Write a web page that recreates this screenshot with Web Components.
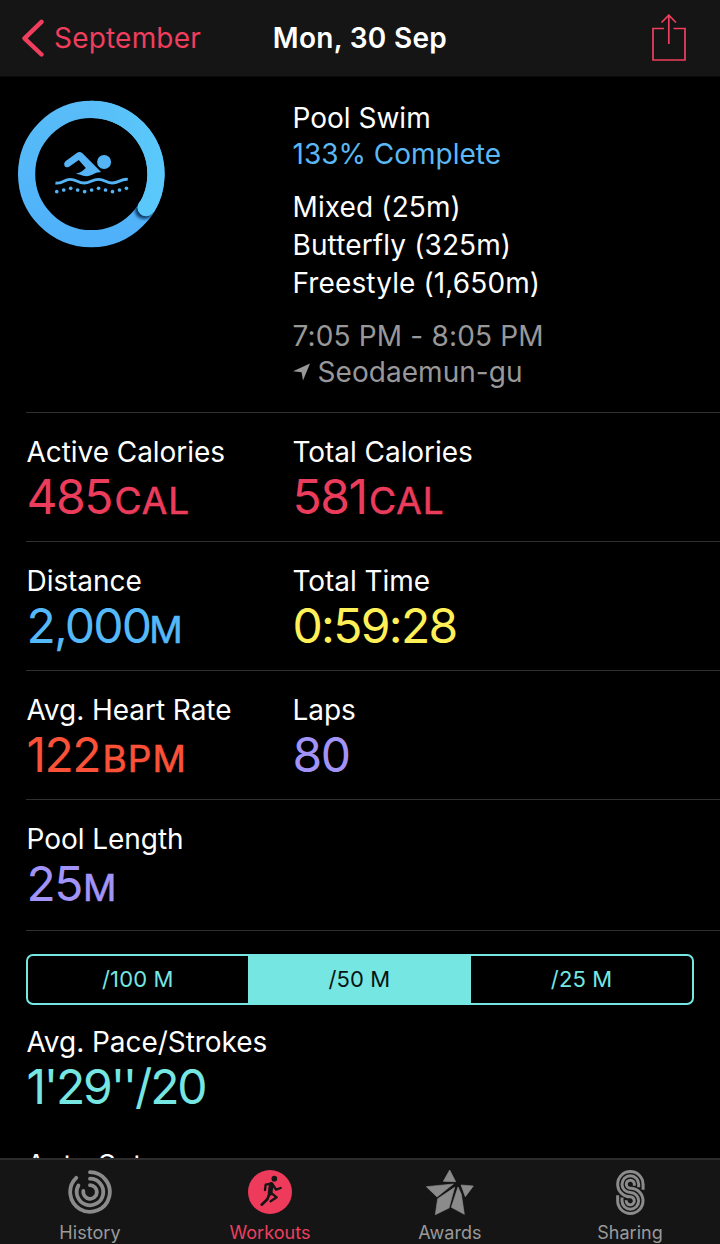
<!DOCTYPE html>
<html lang="en">
<head>
<meta charset="utf-8">
<title>Workout</title>
<style>
  body {
    margin: 0;
    background: #000;
    color: #fff;
    font-family: Inter, "Liberation Sans", sans-serif;
  }
</style>
</head>
<body>
<workout-app></workout-app>

<script>
class NavBar extends HTMLElement {
  constructor() {
    super();
    this.attachShadow({ mode: 'open' });
  }

  connectedCallback() {
    this.shadowRoot.innerHTML = `
      <style>
        :host {
          display: grid;
          grid-template-columns: 1fr auto 1fr;
          align-items: center;
          height: 77px;
          box-sizing: border-box;
          padding: 0 33px 0 21px;
          background: #151515;
          border-bottom: 1px solid #0b0b0b;
          font-size: 28px;
        }
        .back {
          display: flex;
          align-items: center;
          gap: 8px;
          color: #f03e5e;
          letter-spacing: 0.2px;
        }
        h1 {
          margin: 0 -6px 0 6px;
          font-size: 28px;
          font-weight: 600;
          letter-spacing: 0.3px;
        }
        svg { display: block; fill: none; stroke: #f03e5e; }
        .share { justify-self: end; }
      </style>
      <div class="back">
        <svg width="25" height="38" viewBox="0 0 25 38" stroke-width="4.4" stroke-linecap="round" stroke-linejoin="round">
          <path d="M20.5 2.8 3.5 19.3 20.5 35.5"/>
        </svg>
        <slot name="back"></slot>
      </div>
      <h1><slot></slot></h1>
      <svg class="share" width="36" height="48" viewBox="0 0 36 48" stroke-width="1.7">
        <path d="M13 14.5H2V46H34V14.5H22.5M17.8 1V30M10.5 8.5 17.8 1.2 25 8.5"/>
      </svg>
    `;
  }
}

class ProgressRing extends HTMLElement {
  constructor() {
    super();
    this.attachShadow({ mode: 'open' });
  }

  connectedCallback() {
    const dots = [335, 330, 325, 330, 335, 330, 325, 330, 335, 330, 325]
      .map((y, i) => `<circle cx="${170 + i * 20.9}" cy="${y}" r="5.5"/>`)
      .join('');

    this.shadowRoot.innerHTML = `
      <style>
        :host { display: block; }
        svg { display: block; }
      </style>
      <svg width="148" height="148" viewBox="0 0 148 148">
        <defs>
          <linearGradient id="base" x1="0" y1="148" x2="0" y2="0" gradientUnits="userSpaceOnUse">
            <stop offset="0" stop-color="#4fb0fa"/>
            <stop offset="1" stop-color="#58bdf8"/>
          </linearGradient>
          <linearGradient id="lead" x1="74" y1="0" x2="138" y2="0" gradientUnits="userSpaceOnUse">
            <stop offset="0" stop-color="#58bdf8"/>
            <stop offset="1" stop-color="#5ac8fa"/>
          </linearGradient>
          <mask id="band">
            <circle cx="74.3" cy="74" r="64.7" fill="none" stroke="#fff" stroke-width="17.2"/>
          </mask>
          <filter id="soft" x="-50%" y="-50%" width="200%" height="200%"><feGaussianBlur stdDeviation="1.8"/></filter>
        </defs>
        <circle cx="74.3" cy="74" r="64.7" fill="none" stroke="url(#base)" stroke-width="17.2"/>
        <g mask="url(#band)">
          <circle cx="127.2" cy="109.5" r="9.5" fill="#0a3a66" filter="url(#soft)"/>
        </g>
        <path d="M74.3 9.3A64.7 64.7 0 0 1 129.4 107.9" fill="none" stroke="url(#lead)" stroke-width="17.2"/>
        <circle cx="129" cy="107.6" r="8.6" fill="#5ac8fa"/>
        <g transform="translate(-16.9 -20) scale(.33333)" fill="#54b4f6">
          <circle cx="312" cy="246" r="21"/>
          <path d="M196 244 231 218Q239 213 247 220L303 276Q287 277 276 284 264 291 249 287 238 283 227 281 244 278 257 264L236 240 207 260Q197 265 193 257 190 249 196 244Z"/>
          <path d="M166 309C190 313 190 298 210 298S233 309 252 309 275 298 295 298 318 309 337 309 362 296 383 298" fill="none" stroke="#54b4f6" stroke-width="8.5"/>
          ${dots}
        </g>
      </svg>
    `;
  }
}

class WorkoutSummary extends HTMLElement {
  constructor() {
    super();
    this.attachShadow({ mode: 'open' });
  }

  connectedCallback() {
    this.shadowRoot.innerHTML = `
      <style>
        :host {
          display: grid;
          grid-template-columns: 275.5px 1fr;
          height: 335px;
          box-sizing: border-box;
          padding: 23px 0 0 17px;
          font-size: 28px;
          line-height: 36px;
        }
        .complete { color: #5bb8f5; }
        .strokes { margin: 16px 0 15px; line-height: 38.2px; letter-spacing: 0.12px; }
        .when { color: #98989a; letter-spacing: 0.16px; }
        .place { display: flex; align-items: center; gap: 8px; letter-spacing: 0.05px; }
      </style>
      <progress-ring></progress-ring>
      <div>
        <div><slot name="name"></slot></div>
        <div class="complete"><slot name="complete"></slot></div>
        <div class="strokes"><slot name="stroke"></slot></div>
        <div class="when">
          <div><slot name="time"></slot></div>
          <div class="place">
            <svg width="17" height="18" viewBox="0 0 17 18" fill="#98989a"><path d="M0 8.2 17 .6 10 17.6 8.6 9.2Z"/></svg>
            <slot name="place"></slot>
          </div>
        </div>
      </div>
    `;
  }
}

class MetricRow extends HTMLElement {
  constructor() {
    super();
    this.attachShadow({ mode: 'open' });
  }

  connectedCallback() {
    this.shadowRoot.innerHTML = `
      <style>
        :host {
          display: grid;
          grid-template-columns: 266px 1fr;
          height: 129px;
          box-sizing: border-box;
          margin-left: 26px;
          padding: 21px 0 0 0.5px;
          border-top: 1px solid #303032;
        }
      </style>
      <slot></slot>
    `;
  }
}

class MetricValue extends HTMLElement {
  constructor() {
    super();
    this.attachShadow({ mode: 'open' });
  }

  connectedCallback() {
    const unit = this.getAttribute('unit') || '';
    this.shadowRoot.innerHTML = `
      <style>
        :host { display: block; white-space: nowrap; }
        .label { font-size: 28px; line-height: 36px; letter-spacing: var(--label-tracking, -0.05px); }
        .value {
          font-size: 48px;
          line-height: 54px;
          color: var(--tint);
          letter-spacing: var(--tracking, -1.5px);
        }
        .unit {
          margin-left: var(--unit-gap, 2.5px);
          font-size: 37px;
          letter-spacing: 1px;
          -webkit-text-stroke: 0.6px currentColor;
        }
      </style>
      <div class="label">${this.getAttribute('label')}</div>
      <div class="value"><slot></slot><span class="unit">${unit}</span></div>
    `;
  }
}

class SegmentedControl extends HTMLElement {
  constructor() {
    super();
    this.attachShadow({ mode: 'open' });
  }

  connectedCallback() {
    this.shadowRoot.innerHTML = `
      <style>
        :host {
          display: grid;
          grid-template-columns: 219.5px 223.5px 1fr;
          height: 51px;
          box-sizing: border-box;
          border: 2px solid #76e6e2;
          border-radius: 7px;
          overflow: hidden;
          color: #76e6e2;
          font-size: 22px;
          line-height: 47px;
          letter-spacing: 0.1px;
          text-align: center;
        }
        ::slotted([selected]) { background: #76e6e2; color: #071414; }
      </style>
      <slot></slot>
    `;
  }
}

const TAB_ICONS = {
  history: `<svg width="44" height="44" viewBox="0 0 44 44" fill="none" stroke="currentColor" stroke-width="3.8" stroke-linecap="round">
      <path d="M22 2.2A19.8 19.8 0 1 1 8.2 7.8"/>
      <path d="M22 8.7A13.3 13.3 0 1 1 10.4 15.5"/>
      <path d="M22 15.2A6.8 6.8 0 1 1 15.3 21"/>
    </svg>`,
  workouts: `<svg width="44" height="44" viewBox="0 0 132 132">
      <circle cx="66" cy="66" r="66" fill="#ee3a5b"/>
      <circle cx="79" cy="26" r="8.5" fill="#151515"/>
      <g fill="none" stroke="#151515" stroke-width="7" stroke-linecap="round" stroke-linejoin="round">
        <path d="M70 41 53 44 51 60M75 45 84 59 98 54M71 70 86 82 68 94"/>
        <path d="M65 70 58 88 41 104" stroke-width="8"/>
        <path d="M70 43 66 70" stroke-width="14"/>
      </g>
    </svg>`,
  awards: `<svg width="48" height="46.7" viewBox="198 118 144 140" fill="currentColor" stroke="currentColor" stroke-width="2" stroke-linejoin="round">
      <path d="M269 121 287 156 250 155ZM199 171 280 163 231 202ZM233 207 284 173 267 235 226 255ZM294 172 304 194 313 254 274 233ZM303 166 340 169 316 201Z"/>
    </svg>`,
  sharing: `<svg width="29" height="45" viewBox="766 119 87 134" fill="none" stroke="currentColor" stroke-width="9">
      <path d="M847 178Q848 171 847 161A38 38 0 1 0 809 199A12 12 0 1 1 797 209"/>
      <path d="M834 170V161A25 25 0 1 0 809 186A25 25 0 1 1 784 211V201"/>
      <path d="M821 166V161A12 12 0 1 0 809 173A38 38 0 1 1 771 211V194"/>
    </svg>`
};

class TabItem extends HTMLElement {
  constructor() {
    super();
    this.attachShadow({ mode: 'open' });
  }

  connectedCallback() {
    this.shadowRoot.innerHTML = `
      <style>
        :host {
          display: flex;
          flex-direction: column;
          align-items: center;
          color: #9a9a9b;
          font-size: 18px;
          line-height: 22px;
          letter-spacing: 0.05px;
        }
        :host([active]) { color: #ee3f60; }
        .icon {
          display: flex;
          align-items: center;
          justify-content: center;
          height: 48px;
          margin: 8px 0 5.6px;
          color: #8b8b8b;
        }
      </style>
      <div class="icon">${TAB_ICONS[this.getAttribute('icon')]}</div>
      <div><slot></slot></div>
    `;
  }
}

class TabBar extends HTMLElement {
  constructor() {
    super();
    this.attachShadow({ mode: 'open' });
  }

  connectedCallback() {
    this.shadowRoot.innerHTML = `
      <style>
        :host {
          display: grid;
          grid-template-columns: repeat(4, 1fr);
          height: 86px;
          box-sizing: border-box;
          border-top: 2px solid #2c2c2d;
          background: #151515;
        }
      </style>
      <slot></slot>
    `;
  }
}

class WorkoutApp extends HTMLElement {
  constructor() {
    super();
    this.attachShadow({ mode: 'open' });
  }

  connectedCallback() {
    this.shadowRoot.innerHTML = `
      <style>
        :host {
          display: flex;
          flex-direction: column;
          height: 1244px;
          overflow: hidden;
        }
        main { flex: 1; min-height: 0; overflow: hidden; }
        .red { --tint: #ec3c5c; }
        .blue { --tint: #54b8fa; --unit-gap: -1px; --tracking: -1.8px; }
        .yellow { --tint: #fff058; --tracking: -1.7px; }
        .orange { --tint: #fb5139; }
        .purple { --tint: #a293f8; --unit-gap: 1px; }
        .aqua { --tint: #76e6e2; --tracking: -2.2px; }
        .last { height: 131px; }
        .splits {
          margin-left: 26px;
          padding-top: 23px;
          border-top: 1px solid #303032;
        }
        segmented-control { width: 668px; margin-bottom: 19px; }
        .splits metric-value { margin: 0 0 29px 0.5px; }
        .splits .sets { --label-tracking: 0.4px; }
      </style>
      <nav-bar><span slot="back">September</span>Mon, 30 Sep</nav-bar>
      <main>
        <workout-summary>
          <span slot="name">Pool Swim</span>
          <span slot="complete">133% Complete</span>
          <div slot="stroke">Mixed (25m)</div>
          <div slot="stroke">Butterfly (325m)</div>
          <div slot="stroke">Freestyle (1,650m)</div>
          <span slot="time">7:05 PM - 8:05 PM</span>
          <span slot="place">Seodaemun-gu</span>
        </workout-summary>
        <metric-row>
          <metric-value class="red" label="Active Calories" unit="CAL">485</metric-value>
          <metric-value class="red" label="Total Calories" unit="CAL">581</metric-value>
        </metric-row>
        <metric-row>
          <metric-value class="blue" label="Distance" unit="M">2,000</metric-value>
          <metric-value class="yellow" label="Total Time">0:59:28</metric-value>
        </metric-row>
        <metric-row>
          <metric-value class="orange" label="Avg. Heart Rate" unit="BPM">122</metric-value>
          <metric-value class="purple" label="Laps">80</metric-value>
        </metric-row>
        <metric-row class="last">
          <metric-value class="purple" label="Pool Length" unit="M">25</metric-value>
        </metric-row>
        <div class="splits">
          <segmented-control>
            <div>/100 M</div>
            <div selected>/50 M</div>
            <div>/25 M</div>
          </segmented-control>
          <metric-value class="aqua" label="Avg. Pace/Strokes">1'29''/20</metric-value>
          <metric-value class="sets" label="Auto Sets"></metric-value>
        </div>
      </main>
      <tab-bar>
        <tab-item icon="history">History</tab-item>
        <tab-item icon="workouts" active>Workouts</tab-item>
        <tab-item icon="awards">Awards</tab-item>
        <tab-item icon="sharing">Sharing</tab-item>
      </tab-bar>
    `;
  }
}

customElements.define('nav-bar', NavBar);
customElements.define('progress-ring', ProgressRing);
customElements.define('workout-summary', WorkoutSummary);
customElements.define('metric-row', MetricRow);
customElements.define('metric-value', MetricValue);
customElements.define('segmented-control', SegmentedControl);
customElements.define('tab-item', TabItem);
customElements.define('tab-bar', TabBar);
customElements.define('workout-app', WorkoutApp);
</script>
</body>
</html>
